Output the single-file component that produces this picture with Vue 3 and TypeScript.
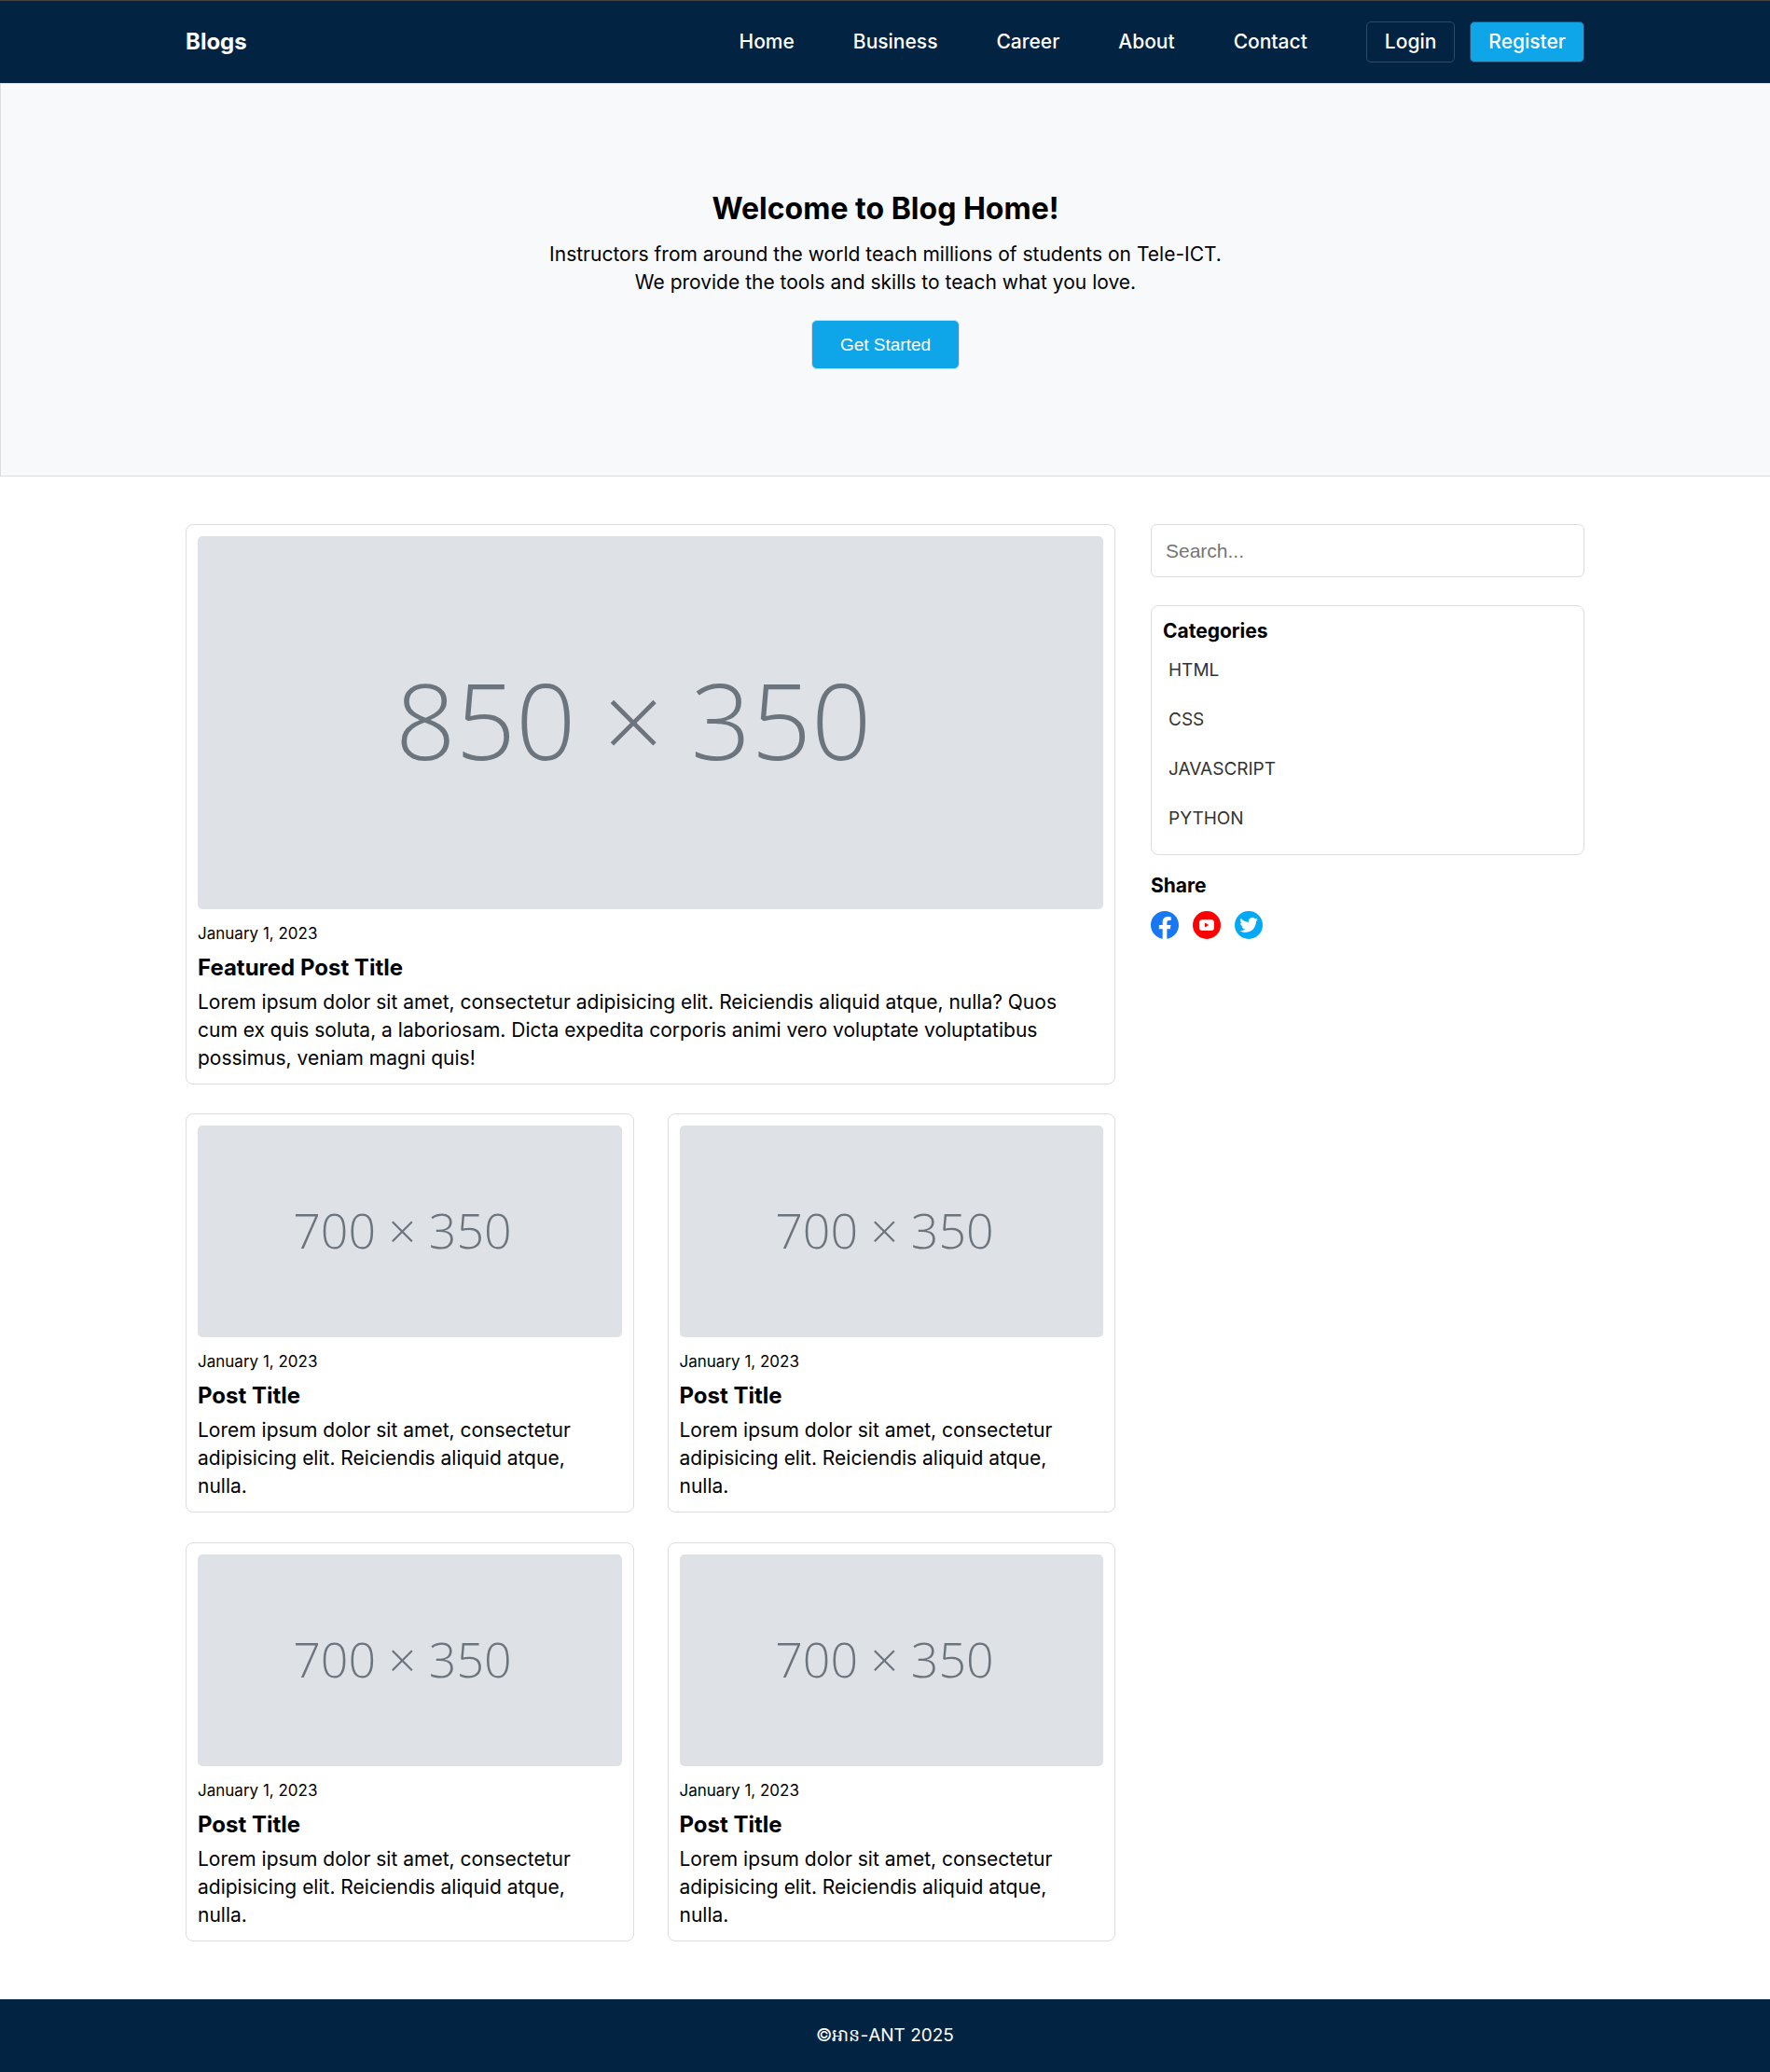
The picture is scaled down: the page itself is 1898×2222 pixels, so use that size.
<script setup lang="ts">
interface Post {
  id: number
  date: string
  title: string
  text: string
}

const links: string[] = ['Home', 'Business', 'Career', 'About', 'Contact']
const categories: string[] = ['HTML', 'CSS', 'JAVASCRIPT', 'PYTHON']

const posts: Post[] = [1, 2, 3, 4].map((id) => ({
  id,
  date: 'January 1, 2023',
  title: 'Post Title',
  text: 'Lorem ipsum dolor sit amet, consectetur adipisicing elit. Reiciendis aliquid atque, nulla.',
}))
</script>

<template>
  <div class="page">
    <header class="header">
      <div class="container bar">
        <a class="brand" href="#">Blogs</a>
        <nav class="nav">
          <a v-for="link in links" :key="link" class="nav-link" href="#">{{ link }}</a>
          <div class="auth">
            <a class="auth-link" href="#">Login</a>
            <a class="auth-link primary" href="#">Register</a>
          </div>
        </nav>
      </div>
    </header>

    <section class="hero">
      <h1 class="hero-title">Welcome to Blog Home!</h1>
      <p class="hero-text">
        Instructors from around the world teach millions of students on Tele-ICT.<br />
        We provide the tools and skills to teach what you love.
      </p>
      <button class="hero-button" type="button">Get Started</button>
    </section>

    <main class="container content">
      <div class="posts">
        <article class="card featured">
          <svg class="thumb" viewBox="0 0 850 350" role="img" aria-label="850 × 350">
            <text class="thumb-text large" x="409" y="210">850 × 350</text>
          </svg>
          <p class="date">January 1, 2023</p>
          <h2 class="title">Featured Post Title</h2>
          <p class="text">
            Lorem ipsum dolor sit amet, consectetur adipisicing elit. Reiciendis aliquid atque, nulla? Quos
            cum ex quis soluta, a laboriosam. Dicta expedita corporis animi vero voluptate voluptatibus
            possimus, veniam magni quis!
          </p>
        </article>

        <div class="grid">
          <article v-for="post in posts" :key="post.id" class="card">
            <svg class="thumb" viewBox="0 0 700 350" role="img" aria-label="700 × 350">
              <text class="thumb-text" x="338" y="203">700 × 350</text>
            </svg>
            <p class="date">{{ post.date }}</p>
            <h2 class="title">{{ post.title }}</h2>
            <p class="text">{{ post.text }}</p>
          </article>
        </div>
      </div>

      <aside class="sidebar">
        <input class="search" type="search" placeholder="Search..." aria-label="Search" />

        <section class="categories">
          <h3 class="side-title">Categories</h3>
          <ul class="category-list">
            <li v-for="category in categories" :key="category">
              <a class="category" href="#">{{ category }}</a>
            </li>
          </ul>
        </section>

        <section class="share">
          <h3 class="side-title">Share</h3>
          <div class="socials">
            <a class="social" href="#" aria-label="Facebook">
              <svg viewBox="0 0 24 24">
                <path
                  fill="#1877f2"
                  d="M24 12c0-6.627-5.373-12-12-12S0 5.373 0 12c0 5.99 4.388 10.954 10.125 11.854v-8.385H7.078v-3.47h3.047V9.43c0-3.007 1.792-4.669 4.533-4.669 1.312 0 2.686.235 2.686.235v2.953H15.83c-1.491 0-1.956.925-1.956 1.874v2.176h3.328l-.532 3.47h-2.796v8.385C19.612 22.954 24 17.99 24 12z"
                />
              </svg>
            </a>
            <a class="social" href="#" aria-label="YouTube">
              <svg viewBox="0 0 24 24">
                <circle cx="12" cy="12" r="12" fill="#ff0000" />
                <rect x="5.7" y="7.3" width="12.6" height="9.4" rx="2.4" fill="#ffffff" />
                <path d="M10.3 10v4l3.6-2z" fill="#ff0000" />
              </svg>
            </a>
            <a class="social" href="#" aria-label="Twitter">
              <svg viewBox="0 0 24 24">
                <circle cx="12" cy="12" r="12" fill="#03a9f4" />
                <path
                  fill="#ffffff"
                  transform="translate(4.3 4.2) scale(.65)"
                  d="M23.953 4.57a10 10 0 01-2.825.775 4.958 4.958 0 002.163-2.723c-.951.555-2.005.959-3.127 1.184a4.92 4.92 0 00-8.384 4.482C7.69 8.095 4.067 6.13 1.64 3.162a4.822 4.822 0 00-.666 2.475c0 1.71.87 3.213 2.188 4.096a4.904 4.904 0 01-2.228-.616v.06a4.923 4.923 0 003.946 4.827 4.996 4.996 0 01-2.212.085 4.936 4.936 0 004.604 3.417 9.867 9.867 0 01-6.102 2.105c-.39 0-.779-.023-1.17-.067a13.995 13.995 0 007.557 2.209c9.053 0 13.998-7.496 13.998-13.985 0-.21 0-.42-.015-.63A9.935 9.935 0 0024 4.59z"
                />
              </svg>
            </a>
          </div>
        </section>
      </aside>
    </main>

    <footer class="footer">©អាន-ANT 2025</footer>
  </div>
</template>

<style>
body {
  margin: 0;
  background: #ffffff;
}
</style>

<style scoped>
.page {
  font-family: Inter, "Noto Sans", sans-serif;
  font-size: 21px;
  line-height: 30px;
  color: #000000;
}

.page * {
  box-sizing: border-box;
}

h1,
h2,
h3,
p,
ul {
  margin: 0;
  padding: 0;
}

a {
  color: inherit;
  text-decoration: none;
}

.container {
  width: calc(100% - 40px);
  max-width: 1500px;
  margin: 0 auto;
}

.header {
  padding: 22px 0;
  border-top: 1px solid #444444;
  background: #022442;
  color: #ffffff;
}

.bar {
  display: flex;
  align-items: center;
  justify-content: space-between;
}

.brand {
  font-size: 24px;
  font-weight: 700;
}

.nav {
  display: flex;
  align-items: center;
  gap: 63px;
  font-weight: 500;
}

.auth {
  display: flex;
  gap: 16px;
}

.auth-link {
  padding: 6px 19px;
  border: 1px solid #2f4a66;
  border-radius: 5px;
}

.auth-link.primary {
  background: #0ea5e9;
}

.hero {
  display: flex;
  flex-direction: column;
  align-items: center;
  padding: 112px 20px 114px;
  border: 1px solid #dddddd;
  border-right: 0;
  background: #f8f9fb;
  text-align: center;
}

.hero-title {
  font-size: 32px;
  line-height: 44px;
  font-weight: 700;
}

.hero-text {
  margin: 12px 0 25px;
}

.hero-button {
  padding: 14px 30px;
  border: 1px solid #dddddd;
  border-radius: 6px;
  background: #0ea5e9;
  color: #ffffff;
  font-family: "Liberation Sans", Arial, sans-serif;
  font-size: 19px;
  line-height: 23px;
}

.content {
  display: grid;
  grid-template-columns: 997fr 465fr;
  gap: 38px;
  align-items: start;
  padding: 51px 0 62px;
}

.posts {
  display: flex;
  flex-direction: column;
  gap: 31px;
}

.grid {
  display: grid;
  grid-template-columns: 1fr 1fr;
  gap: 32px 36px;
}

.card {
  padding: 12px;
  border: 1px solid #dddddd;
  border-radius: 8px;
}

.thumb {
  display: block;
  width: 100%;
  border-radius: 5px;
  background: #dee2e6;
}

.thumb-text {
  fill: #6c757d;
  font-family: "Open Sans", sans-serif;
  font-size: 80px;
  font-weight: 300;
  text-anchor: middle;
}

.thumb-text.large {
  font-size: 99px;
}

.date {
  margin-top: 13px;
  font-size: 17px;
  line-height: 26px;
}

.title {
  margin: 6px 0 4px;
  font-size: 24px;
  line-height: 36px;
  font-weight: 700;
}

.text {
  padding-right: 16px;
}

.search {
  display: block;
  width: 100%;
  padding: 15px;
  border: 1px solid #dddddd;
  border-radius: 6px;
  background: #ffffff;
  font-family: "Liberation Sans", Arial, sans-serif;
  font-size: 21px;
  line-height: 25px;
}

.search::placeholder {
  color: #757575;
}

.categories {
  margin: 30px 0 18px;
  padding: 12px;
  border: 1px solid #dddddd;
  border-radius: 8px;
}

.side-title {
  font-size: 21px;
  line-height: 30px;
  font-weight: 700;
}

.category-list {
  list-style: none;
}

.category {
  display: block;
  padding: 12px 6px 11px;
  color: #333333;
  font-size: 19px;
}

.socials {
  display: flex;
  gap: 15px;
  margin-top: 12px;
}

.social {
  width: 30px;
  height: 30px;
}

.social svg {
  display: block;
  width: 100%;
  height: 100%;
}

.footer {
  padding: 24px 20px;
  background: #022442;
  color: #ffffff;
  font-size: 19px;
  text-align: center;
}
</style>
